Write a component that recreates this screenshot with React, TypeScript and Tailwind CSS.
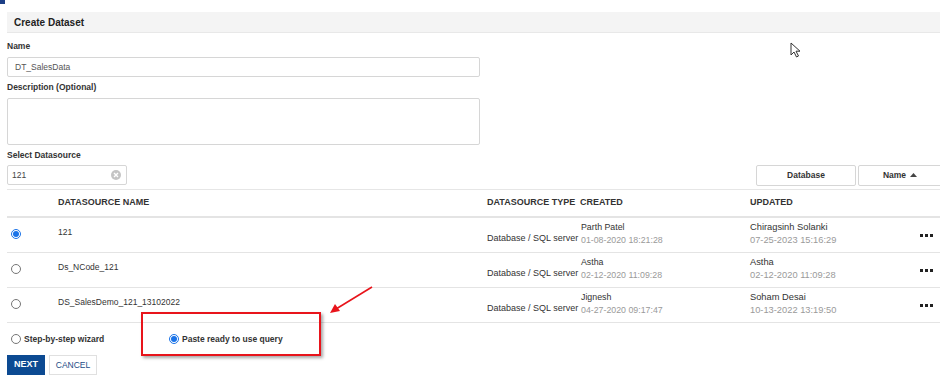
import React from "react";

type Row = {
  name: string;
  type: string;
  createdBy: string;
  createdAt: string;
  updatedBy: string;
  updatedAt: string;
  selected?: boolean;
};

const rows: Row[] = [
  {
    name: "121",
    type: "Database / SQL server",
    createdBy: "Parth Patel",
    createdAt: "01-08-2020 18:21:28",
    updatedBy: "Chiragsinh Solanki",
    updatedAt: "07-25-2023 15:16:29",
    selected: true,
  },
  {
    name: "Ds_NCode_121",
    type: "Database / SQL server",
    createdBy: "Astha",
    createdAt: "02-12-2020 11:09:28",
    updatedBy: "Astha",
    updatedAt: "02-12-2020 11:09:28",
  },
  {
    name: "DS_SalesDemo_121_13102022",
    type: "Database / SQL server",
    createdBy: "Jignesh",
    createdAt: "04-27-2020 09:17:47",
    updatedBy: "Soham Desai",
    updatedAt: "10-13-2022 13:19:50",
  },
];

function Radio({ checked }: { checked?: boolean }) {
  return checked ? (
    <span className="block w-[10px] h-[10px] rounded-full border border-[#1a73e8] bg-white flex items-center justify-center shrink-0">
      <span className="block w-[6px] h-[6px] rounded-full bg-[#1a73e8]" />
    </span>
  ) : (
    <span className="block w-[10px] h-[10px] rounded-full border border-[#767676] bg-white shrink-0" />
  );
}

export default function App() {
  return (
    <div className="relative w-[940px] h-[379px] overflow-hidden bg-white text-[9px] text-[#333] font-['Liberation_Sans',Arial,sans-serif]">
      {/* corner tab */}
      <div className="w-[5px] h-[4px] bg-[#1c3f86]" />

      {/* title bar */}
      <div className="mt-[8px] ml-[7px] h-[21px] bg-[#f4f4f4] border-b border-[#e8e8e8] flex items-center pl-[7px] font-bold text-[10px] text-[#222]">
        Create Dataset
      </div>

      <div className="pl-[7px]">
        <div className="mt-[7px] h-[13px] leading-[13px] font-bold text-[8.5px]">Name</div>
        <div className="mt-[4px] w-[473px] h-[20px] border border-[#d6d6d6] rounded-[2px] flex items-center px-[7px] text-[8.5px] text-[#555]">
          DT_SalesData
        </div>

        <div className="mt-[4px] h-[13px] leading-[13px] font-bold text-[8.5px]">Description (Optional)</div>
        <div className="mt-[4px] w-[473px] h-[47px] border border-[#d6d6d6] rounded-[2px]" />

        <div className="mt-[4px] h-[13px] leading-[13px] font-bold text-[8.5px]">Select Datasource</div>
        <div className="mt-[3px] flex items-center justify-between h-[20px]">
          <div className="w-[120px] h-[20px] border border-[#d6d6d6] rounded-[2px] flex items-center justify-between pl-[4px] pr-[5px] text-[8.5px] text-[#444]">
            <span>121</span>
            <span className="w-[10px] h-[10px] rounded-full bg-[#c4c4c4] flex items-center justify-center">
              <svg width="6" height="6" viewBox="0 0 6 6">
                <path d="M1 1L5 5M5 1L1 5" stroke="#fff" strokeWidth="1.4" />
              </svg>
            </span>
          </div>
          <div className="flex gap-[2px] -mr-[8px]">
            <div className="w-[100px] h-[21px] border border-[#d6d6d6] rounded-[2px] flex items-center justify-center font-bold text-[8.5px] text-[#333]">
              Database
            </div>
            <div className="w-[90px] h-[21px] border border-[#d6d6d6] rounded-[2px] flex items-center justify-center gap-[4px] font-bold text-[8.5px] text-[#333] pr-[6px]">
              Name
              <svg width="7" height="4" viewBox="0 0 7 4">
                <path d="M0 4L3.5 0L7 4Z" fill="#444" />
              </svg>
            </div>
          </div>
        </div>

        {/* table */}
        <div className="mt-[4px] border-t border-[#e6e6e6]">
          <div className="flex h-[28px] items-center border-b-2 border-[#e4e4e4] font-bold text-[9px] text-[#333] whitespace-nowrap">
            <div className="w-[51px]" />
            <div className="w-[429px]">DATASOURCE NAME</div>
            <div className="w-[93px]">DATASOURCE TYPE</div>
            <div className="w-[170px]">CREATED</div>
            <div>UPDATED</div>
          </div>
          {rows.map((r) => (
            <div key={r.name} className="flex h-[35px] border-b border-[#e4e4e4]">
              <div className="w-[51px] pl-[4px] pt-[11px]">
                <Radio checked={r.selected} />
              </div>
              <div className="w-[429px] pt-[8px] leading-[13px] text-[8.5px] text-[#333]">{r.name}</div>
              <div className="w-[93px] pt-[14px] leading-[13px] text-[9px] text-[#333] whitespace-nowrap">{r.type}</div>
              <div className="w-[170px] pt-[3px] pl-[1px] leading-[13px] text-[8.8px]">
                <div className="text-[#333]">{r.createdBy}</div>
                <div className="text-[#9a9a9a]">{r.createdAt}</div>
              </div>
              <div className="w-[170px] pt-[3px] leading-[13px] text-[9.3px]">
                <div className="text-[#333]">{r.updatedBy}</div>
                <div className="text-[#9a9a9a]">{r.updatedAt}</div>
              </div>
              <div className="flex gap-[2px] pt-[16px]">
                <span className="block w-[3px] h-[3px] bg-[#222]" />
                <span className="block w-[3px] h-[3px] bg-[#222]" />
                <span className="block w-[3px] h-[3px] bg-[#222]" />
              </div>
            </div>
          ))}
        </div>

        {/* mode selection */}
        <div className="flex items-center h-[32px] pl-[4px] font-bold text-[8.5px]">
          <Radio />
          <span className="ml-[3px] w-[145px]">Step-by-step wizard</span>
          <Radio checked />
          <span className="ml-[3px]">Paste ready to use query</span>
        </div>

        <div className="flex gap-[4px] h-[20px]">
          <div className="w-[38px] h-[20px] bg-[#0c4a92] text-white font-bold text-[9px] flex items-center justify-center">
            NEXT
          </div>
          <div className="w-[48px] h-[20px] border border-[#e0e0e0] text-[#234b85] text-[8.5px] flex items-center justify-center">
            CANCEL
          </div>
        </div>
      </div>

      {/* annotation box */}
      <div className="absolute left-[141px] top-[312px] w-[180px] h-[44px] border-2 border-[#e8141b] shadow-[2px_2px_3px_rgba(0,0,0,0.35)]" />
      {/* annotation arrow */}
      <svg className="absolute left-[325px] top-[282px]" width="55" height="35" viewBox="0 0 55 35">
        <path d="M47 5L11 27" stroke="#e8141b" strokeWidth="1.6" />
        <path d="M5 31L10 22L15 29Z" fill="#e8141b" />
      </svg>

      {/* mouse cursor */}
      <svg className="absolute left-[790px] top-[42px]" width="12" height="17" viewBox="0 0 12 17">
        <path
          d="M1 1L1 13L4 10L6.5 15L8.5 14L6 9.2L10 9.2Z"
          fill="#fff"
          stroke="#333"
          strokeWidth="1"
          strokeLinejoin="round"
        />
      </svg>
    </div>
  );
}
